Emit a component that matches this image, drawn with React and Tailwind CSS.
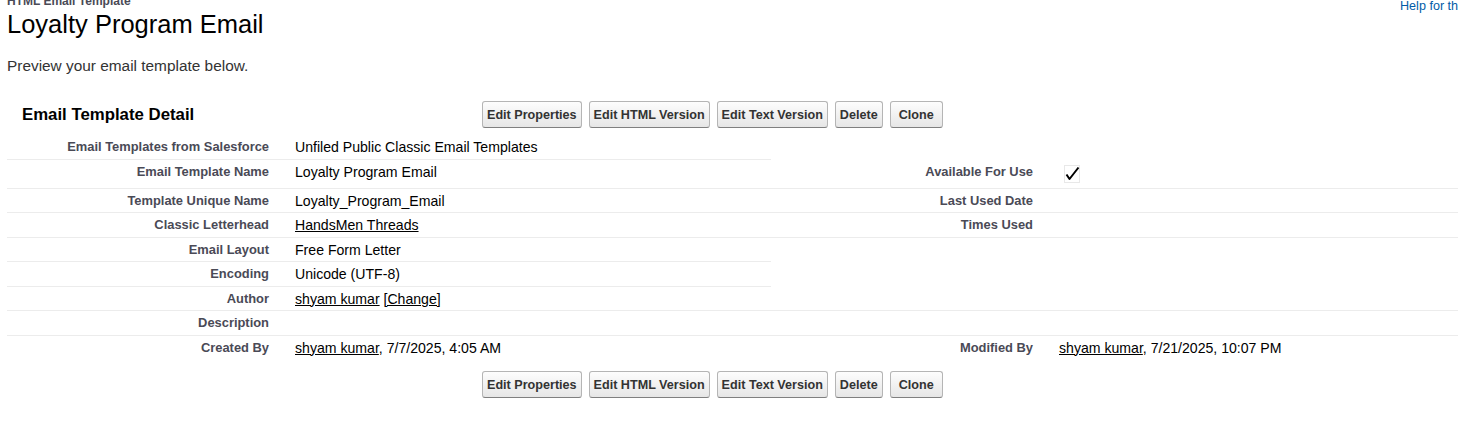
import React from "react";

const Btn = ({ children, wide }) => (
  <button
    className={
      "h-[27px] rounded-[3px] border border-[#b5b5b5] border-b-[#7f7f7f] bg-linear-to-b from-[#fdfdfd] to-[#e6e6e6] text-[12.6px] font-bold leading-[16px] text-[#333] " +
      (wide ? "px-[8px]" : "px-[4px]")
    }
  >
    {children}
  </button>
);

const ButtonBar = () => (
  <div className="flex gap-[7px]">
    <Btn>Edit Properties</Btn>
    <Btn>Edit HTML Version</Btn>
    <Btn>Edit Text Version</Btn>
    <Btn>Delete</Btn>
    <Btn wide>Clone</Btn>
  </div>
);

const Check = () => (
  <svg width="24" height="21" viewBox="0 0 24 21" className="block">
    <rect x="5.5" y="1.5" width="15" height="17" fill="none" stroke="#d0d0d0" strokeWidth="1" strokeDasharray="1 1" />
    <path d="M7.5 10.5 L10.5 15 L19.5 3.5" fill="none" stroke="#000" strokeWidth="2" strokeLinejoin="round" />
  </svg>
);

const Link = ({ children }) => <span className="underline text-black">{children}</span>;

// label/value pairs, border flags per half
const rows = [
  { l: "Email Templates from Salesforce", v: "Unfiled Public Classic Email Templates", lb: true, rb: false },
  { l: "Email Template Name", v: "Loyalty Program Email", rl: "Available For Use", rv: <Check />, lb: true, rb: true },
  { l: "Template Unique Name", v: "Loyalty_Program_Email", rl: "Last Used Date", lb: true, rb: true },
  { l: "Classic Letterhead", v: <Link>HandsMen Threads</Link>, rl: "Times Used", lb: true, rb: true },
  { l: "Email Layout", v: "Free Form Letter", lb: true, rb: false },
  { l: "Encoding", v: "Unicode (UTF-8)", lb: true, rb: false },
  {
    l: "Author",
    v: (
      <>
        <Link>shyam kumar</Link> <Link>[Change]</Link>
      </>
    ),
    lb: true,
    rb: true,
  },
  { l: "Description", full: true, lb: true, rb: true },
  {
    l: "Created By",
    v: (
      <>
        <Link>shyam kumar</Link>, 7/7/2025, 4:05 AM
      </>
    ),
    rl: "Modified By",
    rv: (
      <>
        <Link>shyam kumar</Link>, 7/21/2025, 10:07 PM
      </>
    ),
    lb: false,
    rb: false,
  },
];

const Label = ({ children }) => (
  <div className="w-[274px] shrink-0 pr-[12px] pt-[4px] pb-[3px] text-right text-[12.9px] font-bold leading-[16.5px] text-[#4a4a56]">
    {children}
  </div>
);

const Value = ({ children, className = "" }) => (
  <div className={"pl-[14px] pt-[4px] pb-[3px] text-[14.1px] leading-[16.5px] text-black " + className}>{children}</div>
);

const App = () => {
  return (
    <div className="h-[430px] w-[1458px] overflow-hidden bg-white font-['Liberation_Sans',Arial,sans-serif]">
      <div className="w-[1540px] pl-[7px]">
        {/* page title */}
        <div className="flex">
          <div className="w-[1393px] shrink-0">
            <div className="-mt-[6px] text-[12px] font-bold leading-[14px] text-[#4a4a56]">HTML Email Template</div>
            <h1 className="mt-[1px] text-[25.5px] leading-[30px] text-black">Loyalty Program Email</h1>
          </div>
          <div className="text-[12.6px] leading-[13px] text-[#015ba7]">Help for this Page</div>
        </div>
        <p className="mt-[17px] text-[15.4px] leading-[20px] text-[#333]">Preview your email template below.</p>

        {/* block header */}
        <div className="mt-[25px] flex items-center">
          <h2 className="w-[475px] shrink-0 pl-[15px] text-[16.8px] font-bold text-black">Email Template Detail</h2>
          <ButtonBar />
        </div>

        {/* detail rows */}
        <div className="mt-[7px]">
          {rows.map((r, i) =>
            r.full ? (
              <div key={i} className="flex border-b border-[#ececec]">
                <Label>{r.l}</Label>
                <Value className="flex-1">&nbsp;</Value>
              </div>
            ) : (
              <div key={i} className="flex">
                <div className={"flex w-[764px] shrink-0 " + (r.lb ? "border-b border-[#ececec]" : "")}>
                  <Label>{r.l}</Label>
                  <Value className="flex-1">{r.v}</Value>
                </div>
                <div className={"flex flex-1 " + (r.rb ? "border-b border-[#ececec]" : "")}>
                  <Label>{r.rl}</Label>
                  <Value className="flex-1">{r.rv}</Value>
                </div>
              </div>
            )
          )}
        </div>

        {/* bottom buttons */}
        <div className="mt-[12px] flex">
          <div className="w-[475px] shrink-0" />
          <ButtonBar />
        </div>
      </div>
    </div>
  );
};

export default App;
